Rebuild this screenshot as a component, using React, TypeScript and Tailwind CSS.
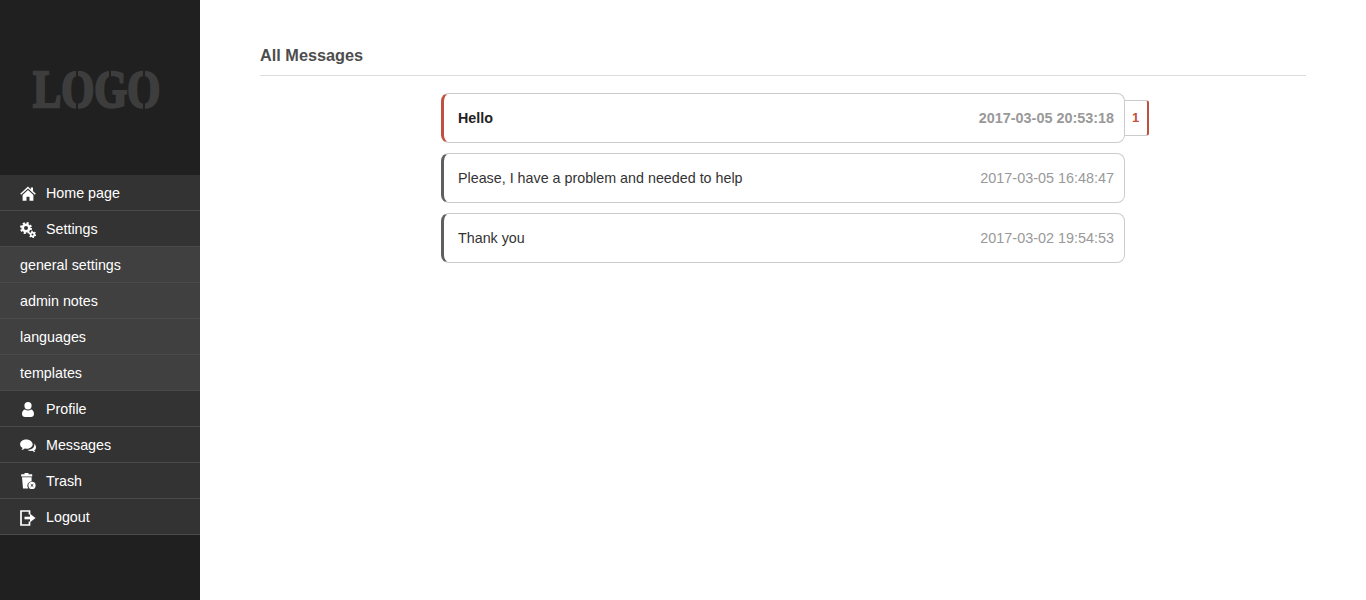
import type { ReactNode } from "react";

function HomeIcon() {
  return (
    <svg viewBox="0 0 16 15" className="h-[15px] w-[16px]" fill="white">
      <path d="M8 .6L.2 7.700l1 1.100L8 2.600l6.800 6.200 1-1.100-2.800-2.600V1.400h-2.200v2.100z" />
      <path d="M2.600 9L8 4 13.400 9v5.800H9.500v-4H6.500v4H2.600z" />
    </svg>
  );
}

function CogsIcon() {
  return (
    <svg viewBox="0 0 16 16" className="h-[16px] w-[16px]" fill="none" stroke="white">
      <circle cx="6" cy="6" r="3.300" strokeWidth="2.600" />
      <circle cx="6" cy="6" r="5" strokeWidth="2" strokeDasharray="2.100 1.830" />
      <circle cx="12.500" cy="12.500" r="1.800" strokeWidth="1.700" />
      <circle cx="12.500" cy="12.500" r="3" strokeWidth="1.400" strokeDasharray="1.500 1.640" />
    </svg>
  );
}

function UserIcon() {
  return (
    <svg viewBox="0 0 12 15" className="h-[15px] w-[12px]" fill="white">
      <ellipse cx="6" cy="3.700" rx="3.600" ry="3.700" />
      <path d="M0 12c0-3 1.600-4.300 3-4.500 1.800 1.200 4.200 1.200 6 0 1.400.2 3 1.500 3 4.500 0 2-1.500 3-3 3H3c-1.500 0-3-1-3-3z" />
    </svg>
  );
}

function CommentsIcon() {
  return (
    <svg viewBox="0 0 16 14" className="h-[14px] w-[16px]" fill="white">
      <path d="M6.400.4C3 .4.100 2.400.100 5.200c0 1.600 1 3 2.500 3.800-.2.800-.7 1.500-1.200 2 1.300-.1 2.500-.7 3.400-1.400.5.100 1 .1 1.600.1 3.400 0 6.300-2 6.300-4.500S9.800.4 6.400.4z" />
      <path d="M14 4.200c.3.500.4 1 .4 1.500 0 3-3 5-6.800 5.200.9.700 2.100 1 3.400 1 .5 0 1 0 1.400-.1.800.7 1.800 1.200 2.900 1.300-.4-.5-.8-1.100-1-1.800 1.100-.7 1.700-1.700 1.700-2.900 0-1.600-.7-3-2-4.200z" />
    </svg>
  );
}

function TrashIcon() {
  return (
    <svg viewBox="0 0 15 17" className="h-[17px] w-[15px]" fill="white">
      <path d="M3.500 0h4v1.300h3.700v2.200H.200V1.300h3.300z" />
      <path d="M1 4.300h9.600v3.900a4.500 4.500 0 0 0-3.400 7.200H2z" />
      <circle cx="11" cy="12.400" r="3.600" />
      <path d="M9.700 11.100l2.600 2.600M12.300 11.100l-2.600 2.600" stroke="#333" strokeWidth="1" />
    </svg>
  );
}

function LogoutIcon() {
  return (
    <svg viewBox="0 0 16 16" className="h-[16px] w-[16px]" fill="none" stroke="white" strokeWidth="1.700">
      <path d="M9.500 4.600V1H1v14h8.500v-3.600" />
      <path d="M4.500 8h6.200" strokeWidth="2.600" />
      <path d="M10 3.700L15.600 8 10 12.300z" fill="white" stroke="none" />
    </svg>
  );
}

const menu: { label: string; icon?: ReactNode }[] = [
  { label: "Home page", icon: <HomeIcon /> },
  { label: "Settings", icon: <CogsIcon /> },
  { label: "general settings" },
  { label: "admin notes" },
  { label: "languages" },
  { label: "templates" },
  { label: "Profile", icon: <UserIcon /> },
  { label: "Messages", icon: <CommentsIcon /> },
  { label: "Trash", icon: <TrashIcon /> },
  { label: "Logout", icon: <LogoutIcon /> },
];

const messages = [
  { text: "Hello", date: "2017-03-05 20:53:18", unread: 1 },
  { text: "Please, I have a problem and needed to help", date: "2017-03-05 16:48:47", unread: 0 },
  { text: "Thank you", date: "2017-03-02 19:54:53", unread: 0 },
];

export default function App() {
  return (
    <div className="flex h-[600px] overflow-hidden bg-white font-['Liberation_Sans',Arial,sans-serif]">
      <aside className="w-[200px] shrink-0 bg-[#202020]">
        <div className="flex h-[175px] items-start justify-center pt-[59px] pr-[7px]">
          <div className="relative">
            <span className="block origin-center scale-x-[0.8] font-['Liberation_Serif',serif] text-[53px] leading-[60px] font-bold text-[#3d3d3d] [-webkit-text-stroke:2.5px_#3d3d3d]">
              LOGO
            </span>
            {/* stencil slits */}
            <span className="absolute top-[10px] left-[59px] h-[40px] w-[2px] bg-[#202020]" />
            <span className="absolute top-[10px] left-[126px] h-[40px] w-[2px] bg-[#202020]" />
            <span className="absolute top-[10px] left-[92px] h-[15px] w-[2px] bg-[#202020]" />
          </div>
        </div>
        <nav>
          {menu.map((item) => (
            <a
              key={item.label}
              href="#"
              className={`flex h-[36px] items-center border-b border-[#4a4a4a] pt-[2px] pl-[20px] text-[14.3px] text-white ${
                item.icon ? "bg-[#333333]" : "bg-[#404040]"
              }`}
            >
              {item.icon && (
                <span className="mr-[10px] flex w-[16px] shrink-0 items-center justify-center">{item.icon}</span>
              )}
              {item.label}
            </a>
          ))}
        </nav>
      </aside>
      <main className="flex-1 px-[60px] pt-[45px]">
        <h2 className="h-[31px] border-b border-[#dddddd] text-[16.3px] leading-[20px] font-bold text-[#4d4d4d]">
          All Messages
        </h2>
        <div className="mt-[17px] flex flex-col gap-[10px] pl-[181px]">
          {messages.map((m) => (
            <div key={m.date} className="relative w-[684px]">
              <div
                className={`relative z-10 flex h-[50px] items-center justify-between rounded-[8px] border border-l-[3px] border-[#cccccc] bg-white pt-[2px] pr-[10px] pl-[14px] text-[14.3px] ${
                  m.unread ? "border-l-[#c0503f] font-bold text-[#222222]" : "border-l-[#5f5f5f] text-[#333333]"
                }`}
              >
                <span>{m.text}</span>
                <span className="text-[14.4px] text-[#999999]">{m.date}</span>
              </div>
              {m.unread > 0 && (
                <span className="absolute top-[7px] left-[680px] flex h-[36px] w-[28px] items-center justify-center rounded-r-[3px] border border-r-2 border-l-0 border-[#cccccc] border-r-[#c0503f] bg-white pl-[3px] text-[13px] font-bold text-[#c0503f]">
                  {m.unread}
                </span>
              )}
            </div>
          ))}
        </div>
      </main>
    </div>
  );
}
